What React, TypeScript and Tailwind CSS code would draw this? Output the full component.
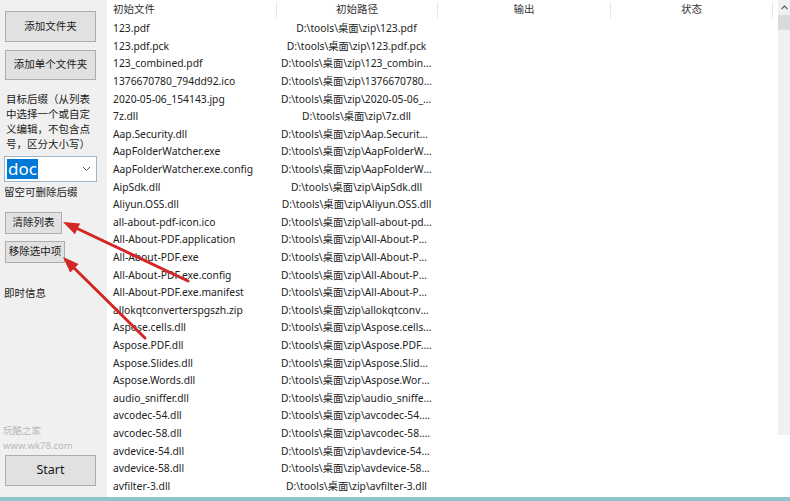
const files: { name: string; path: string }[] = [
  { name: "123.pdf", path: "D:\\tools\\桌面\\zip\\123.pdf" },
  { name: "123.pdf.pck", path: "D:\\tools\\桌面\\zip\\123.pdf.pck" },
  { name: "123_combined.pdf", path: "D:\\tools\\桌面\\zip\\123_combined.pdf" },
  { name: "1376670780_794dd92.ico", path: "D:\\tools\\桌面\\zip\\1376670780_794dd92.ico" },
  { name: "2020-05-06_154143.jpg", path: "D:\\tools\\桌面\\zip\\2020-05-06_154143.jpg" },
  { name: "7z.dll", path: "D:\\tools\\桌面\\zip\\7z.dll" },
  { name: "Aap.Security.dll", path: "D:\\tools\\桌面\\zip\\Aap.Security.dll" },
  { name: "AapFolderWatcher.exe", path: "D:\\tools\\桌面\\zip\\AapFolderWatcher.exe" },
  { name: "AapFolderWatcher.exe.config", path: "D:\\tools\\桌面\\zip\\AapFolderWatcher.exe.config" },
  { name: "AipSdk.dll", path: "D:\\tools\\桌面\\zip\\AipSdk.dll" },
  { name: "Aliyun.OSS.dll", path: "D:\\tools\\桌面\\zip\\Aliyun.OSS.dll" },
  { name: "all-about-pdf-icon.ico", path: "D:\\tools\\桌面\\zip\\all-about-pdf-icon.ico" },
  { name: "All-About-PDF.application", path: "D:\\tools\\桌面\\zip\\All-About-PDF.application" },
  { name: "All-About-PDF.exe", path: "D:\\tools\\桌面\\zip\\All-About-PDF.exe" },
  { name: "All-About-PDF.exe.config", path: "D:\\tools\\桌面\\zip\\All-About-PDF.exe.config" },
  { name: "All-About-PDF.exe.manifest", path: "D:\\tools\\桌面\\zip\\All-About-PDF.exe.manifest" },
  { name: "allokqtconverterspgszh.zip", path: "D:\\tools\\桌面\\zip\\allokqtconverterspgszh.zip" },
  { name: "Aspose.cells.dll", path: "D:\\tools\\桌面\\zip\\Aspose.cells.dll" },
  { name: "Aspose.PDF.dll", path: "D:\\tools\\桌面\\zip\\Aspose.PDF.dll" },
  { name: "Aspose.Slides.dll", path: "D:\\tools\\桌面\\zip\\Aspose.Slides.dll" },
  { name: "Aspose.Words.dll", path: "D:\\tools\\桌面\\zip\\Aspose.Words.dll" },
  { name: "audio_sniffer.dll", path: "D:\\tools\\桌面\\zip\\audio_sniffer.dll" },
  { name: "avcodec-54.dll", path: "D:\\tools\\桌面\\zip\\avcodec-54.dll" },
  { name: "avcodec-58.dll", path: "D:\\tools\\桌面\\zip\\avcodec-58.dll" },
  { name: "avdevice-54.dll", path: "D:\\tools\\桌面\\zip\\avdevice-54.dll" },
  { name: "avdevice-58.dll", path: "D:\\tools\\桌面\\zip\\avdevice-58.dll" },
  { name: "avfilter-3.dll", path: "D:\\tools\\桌面\\zip\\avfilter-3.dll" },
];

const cols = "grid grid-cols-[169px_161px_173px_163px_1fr]";

function WinButton({ label, className }: { label: string; className: string }) {
  return (
    <div className={`flex items-center justify-center border border-[#adadad] bg-[#e1e1e1] text-[#1a1a1a] ${className}`}>
      {label}
    </div>
  );
}

export default function App() {
  return (
    <div
      className="relative flex h-[501px] w-[790px] flex-col overflow-hidden bg-white text-[10.3px] text-[#222]"
      style={{ fontFamily: '"Noto Sans", "Noto Sans CJK SC", sans-serif' }}
    >
      <div className="flex min-h-0 flex-1">
        {/* left side panel */}
        <div className="flex w-[107px] shrink-0 flex-col bg-[#f0f0f0] pl-[5px] text-[10.5px]">
          <WinButton label="添加文件夹" className="mt-[11px] h-[31px] w-[91px]" />
          <WinButton label="添加单个文件夹" className="mt-[8px] h-[30px] w-[91px]" />
          <div className="mt-[12px] pl-[1px] leading-[15px] text-[#1a1a1a]">
            <div>目标后缀（从列表</div>
            <div>中选择一个或自定</div>
            <div>义编辑，不包含点</div>
            <div>号，区分大小写）</div>
          </div>
          <div className="ml-[-1px] mt-[4px] flex h-[26px] w-[93px] items-center border border-[#9bb5c9] bg-white pl-[2px] pr-[5px]">
            <span className="bg-[#0078d7] px-[1px] text-[17px] leading-[20px] text-white">doc</span>
            <svg className="ml-auto" width="9" height="6" viewBox="0 0 9 6">
              <path d="M1 1 L4.5 4.5 L8 1" fill="none" stroke="#555" strokeWidth="1" />
            </svg>
          </div>
          <div className="ml-[-1px] mt-[3px] text-[#1a1a1a]">留空可删除后缀</div>
          <WinButton label="清除列表" className="mt-[11px] h-[22px] w-[57px]" />
          <WinButton label="移除选中项" className="mt-[7px] h-[22px] w-[60px]" />
          <div className="ml-[-1px] mt-[23px] text-[#1a1a1a]">即时信息</div>
          <div className="mt-auto ml-[-2px] text-[9.5px] leading-[15px] text-[#b9b9b9]">
            <div>玩酷之家</div>
            <div>www.wk78.com</div>
          </div>
          <WinButton label="Start" className="mb-[11px] mt-[2px] h-[31px] w-[91px] text-[12.5px]" />
        </div>

        {/* file list */}
        <div className="min-w-0 flex-1 bg-white">
          <div className={`${cols} h-[20px] items-center text-[10.5px] text-[#333]`}>
            <div className="pl-[6px]">初始文件</div>
            <div className="border-l border-[#e6e6e6] text-center">初始路径</div>
            <div className="border-l border-[#e6e6e6] text-center">输出</div>
            <div className="border-x border-[#e6e6e6] text-center">状态</div>
            <div />
          </div>
          {files.map((f) => (
            <div key={f.name} className={`${cols} h-[17.6px] items-center leading-[17px]`}>
              <div className="truncate pl-[6px]">{f.name}</div>
              <div className="truncate px-[5px] text-center">{f.path}</div>
              <div />
              <div />
              <div />
            </div>
          ))}
        </div>

        {/* scrollbar */}
        <div className="flex w-[12px] shrink-0 flex-col">
          <div className="flex h-[15px] items-center justify-center bg-[#f0f0f0]">
            <svg width="7" height="5" viewBox="0 0 7 5">
              <path d="M0.5 4 L3.5 1 L6.5 4" fill="none" stroke="#606060" strokeWidth="1.2" />
            </svg>
          </div>
          <div className="h-[15px] bg-[#dadada]" />
          <div className="h-[405px] bg-[#f0f0f0]" />
          <div className="flex-1 bg-white" />
        </div>
      </div>
      <div className="h-[4px] bg-[#8fc5ca]" />

      {/* red annotation arrows */}
      <svg className="pointer-events-none absolute left-0 top-0" width="790" height="501">
        <line x1="188" y1="281" x2="74" y2="227" stroke="#d32626" strokeWidth="3" strokeLinecap="round" />
        <polygon points="63,222 80.1,223.4 74.9,234.2" fill="#d32626" />
        <line x1="145" y1="338" x2="71" y2="265" stroke="#d32626" strokeWidth="3" strokeLinecap="round" />
        <polygon points="63,257 78.6,263.9 70.2,272.5" fill="#d32626" />
      </svg>
    </div>
  );
}
